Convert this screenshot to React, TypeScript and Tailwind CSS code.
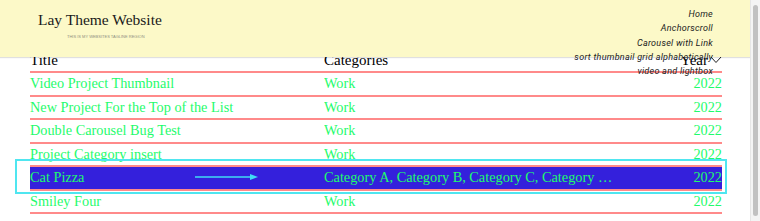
const rows = [
  { title: "Video Project Thumbnail", categories: "Work", year: "2022" },
  { title: "New Project For the Top of the List", categories: "Work", year: "2022" },
  { title: "Double Carousel Bug Test", categories: "Work", year: "2022" },
  { title: "Project Category insert", categories: "Work", year: "2022" },
  {
    title: "Cat Pizza",
    categories: "Category A, Category B, Category C, Category D, Category E",
    year: "2022",
    active: true,
  },
  { title: "Smiley Four", categories: "Work", year: "2022" },
];

const navItems = [
  "Home",
  "Anchorscroll",
  "Carousel with Link",
  "sort thumbnail grid alphabetically",
  "video and lightbox",
];

const App = () => {
  return (
    <div className="w-[760px] h-[221px] overflow-hidden flex bg-white">
      <div className="relative flex-1 overflow-hidden">
        {/* site header */}
        <div className="absolute top-0 left-0 right-0 h-[57px] bg-[#fcf9c8] shadow-[0_1px_1px_rgba(0,0,0,0.12)] z-10">
          <div className="pl-[38px] pt-[11px] flex flex-col">
            <div className="text-[15.5px] leading-[18px] text-[#1a1a1a] font-['Liberation_Serif',Georgia,serif]">
              Lay Theme Website
            </div>
            <div className="pl-[29px] pt-[5px] text-[4px] leading-[5px] text-[#8f8f80] uppercase font-['Liberation_Sans',sans-serif]">
              This is my websites tagline region
            </div>
          </div>
        </div>
        <nav className="absolute top-[7px] right-[37px] z-20 flex flex-col items-end text-[9px] leading-[14.3px] italic tracking-[0.03em] text-[#222] font-['Roboto',sans-serif]">
          {navItems.map((item) => (
            <span key={item}>{item}</span>
          ))}
        </nav>

        {/* project table */}
        <div className="pt-[49.5px] pl-[30px] pr-[28px] font-['Liberation_Serif',serif] text-[14.3px]">
          <div className="flex items-center h-[23.5px] border-b-2 border-[#ff8a8a] text-black text-[15px]">
            <div className="w-[294px]">Title</div>
            <div className="w-[290px]">Categories</div>
            <div className="flex-1 flex items-center justify-end gap-[2px]">
              <span>Year</span>
              <svg width="12" height="8" viewBox="0 0 12 8" fill="none" stroke="#222" strokeWidth="1">
                <polyline points="1,1 6,6.5 11,1" />
              </svg>
            </div>
          </div>
          {rows.map((row) => (
            <div
              key={row.title}
              className={`relative flex items-center h-[23.5px] border-b-2 border-[#ff8a8a] text-[#1ffb6c] ${
                row.active ? "bg-[#3420dc] border-[#b0147a]" : ""
              }`}
            >
              <div className="w-[294px] whitespace-nowrap">{row.title}</div>
              <div className="w-[290px] truncate">{row.categories}</div>
              <div className="flex-1 text-right">{row.year}</div>
              {row.active && (
                <>
                  <svg
                    className="absolute left-[165px] top-[6px]"
                    width="64"
                    height="8"
                    viewBox="0 0 64 8"
                  >
                    <line x1="0" y1="4" x2="56" y2="4" stroke="#3fdcf5" strokeWidth="1.5" />
                    <polygon points="55,1 63,4 55,7" fill="#3fdcf5" />
                  </svg>
                  <div className="absolute left-[-15px] right-[-5px] top-[-8px] bottom-[-5px] border-2 border-[#4fe6f0] pointer-events-none" />
                </>
              )}
            </div>
          ))}
        </div>
      </div>

      {/* scrollbar */}
      <div className="w-[10px] h-full bg-[#f4f4f4] border-l border-[#e6e6e6] flex justify-center py-[5px]">
        <div className="w-[5px] h-full rounded-full bg-[#c1c1c1]" />
      </div>
    </div>
  );
};

export default App;
